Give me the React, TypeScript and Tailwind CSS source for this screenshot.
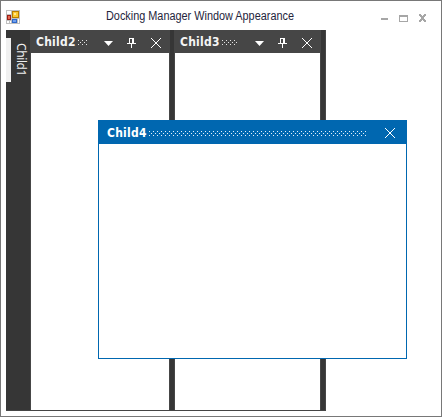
import { useId } from 'react';

function Grip({ width, color }: { width: number; color: string }) {
  const id = useId();
  return (
    <svg width={width} height="5" shapeRendering="crispEdges" className="mt-[2px] shrink-0">
      <defs>
        <pattern id={id} width="4" height="4" patternUnits="userSpaceOnUse">
          <rect width="1" height="1" fill={color} />
          <rect x="2" y="2" width="1" height="1" fill={color} />
        </pattern>
      </defs>
      <rect width={width} height="5" fill={`url(#${id})`} />
    </svg>
  );
}

const closeSteps = [0, 1, 2, 3, 4, 5, 6, 7, 8, 9];

function CloseIcon() {
  return (
    <svg width="10" height="10" viewBox="0 0 10 10" shapeRendering="crispEdges" className="block shrink-0" fill="#fff">
      {closeSteps.map((i) => (
        <g key={i}>
          <rect x={i} y={i} width="1" height="1" />
          <rect x={9 - i} y={i} width="1" height="1" />
        </g>
      ))}
    </svg>
  );
}

function ArrowIcon() {
  return (
    <svg width="9" height="10" viewBox="0 0 9 10" className="block shrink-0">
      <path d="M0 3h9L4.5 8z" fill="#fff" />
    </svg>
  );
}

function PinIcon() {
  return (
    <svg width="9" height="10" viewBox="0 0 9 10" shapeRendering="crispEdges" className="block shrink-0">
      <path d="M2 0h5v5h2v1H5v4H4V6H0V5h2zM3 1v4h2V1z" fill="#fff" fillRule="evenodd" />
    </svg>
  );
}

function DockHeader({ title, grip }: { title: string; grip: number }) {
  return (
    <div className="flex h-[23px] items-center bg-[#464646] pr-[8px] pl-[5px]">
      <span className="w-[42px] shrink-0 pt-[2px] font-['DejaVu_Sans_Condensed','DejaVu_Sans',sans-serif] text-[12px] leading-[21px] font-bold tracking-[0.25px] text-[#f4f4f4] [font-stretch:condensed]">
        {title}
      </span>
      <Grip width={grip} color="#e4e4e4" />
      <div className="ml-auto flex items-center pt-[3px]">
        <ArrowIcon />
        <div className="ml-[14px]"><PinIcon /></div>
        <div className="ml-[15px]"><CloseIcon /></div>
      </div>
    </div>
  );
}

function AppIcon() {
  return (
    <svg width="14" height="14" viewBox="0 0 14 14" shapeRendering="crispEdges">
      <path d="M0 0h14v14H0z" fill="#c0c0c0" />
      <path d="M1 1h4v3H1zM1 11h2v2H1zM4 11h1v2H4zM12 9h1v4h-1z" fill="#fff" />
      <path d="M1 5h4v5H1z" fill="#9c1c14" />
      <path d="M2 6h2v3H2z" fill="#e86850" />
      <path d="M6 1h7v7H6z" fill="#b87c00" />
      <path d="M7 2h5v5H7z" fill="#fcc830" />
      <path d="M8 3h2v2H8z" fill="#ffe890" />
      <path d="M6 9h5v4H6z" fill="#3068c8" />
      <path d="M7 10h3v2H7z" fill="#70a0f0" />
    </svg>
  );
}

function WindowButtons() {
  return (
    <svg width="46" height="9" viewBox="0 0 46 9" shapeRendering="crispEdges">
      <g fill="#a6a6a6">
        <path d="M0 4h7v2H0z" />
        <path d="M18 1h9v7h-9zM19 3v4h7V3z" fillRule="evenodd" />
        <path d="M38 0h2v1h-2zM43 0h2v1h-2zM38 1h3v1h-3zM42 1h3v1h-3zM39 2h5v1h-5zM40 3h3v2h-3zM39 5h5v1h-5zM38 6h3v1h-3zM42 6h3v1h-3zM38 7h2v1h-2zM43 7h2v1h-2z" />
      </g>
    </svg>
  );
}

export default function App() {
  return (
    <div className="relative flex h-[417px] w-[442px] flex-col border border-[#787878] bg-white pl-[5px] font-['Noto_Sans','Open_Sans',sans-serif]">
      <div className="flex h-[29px] shrink-0">
        <div className="mt-[9px] w-[100px]"><AppIcon /></div>
        <h1 className="mt-[7px] w-[275px] origin-left scale-x-[0.906] font-['Liberation_Sans',sans-serif] text-[12px] leading-[16px] font-normal whitespace-nowrap text-[#25253c]">
          Docking Manager Window Appearance
        </h1>
        <div className="mt-[13px]"><WindowButtons /></div>
      </div>
      <div className="flex h-[381px] w-[320px] border-b border-[#464646]">
        <aside className="flex w-[25px] border-r border-[#464646] bg-[#363636]">
          <div className="mt-[8px] h-[44px] w-[5px] bg-[#f0f0f0]" />
          <span className="mt-[13px] ml-px text-[12px] leading-[18px] tracking-[-0.4px] text-[#eeeeee] [writing-mode:vertical-rl]">Child1</span>
        </aside>
        <section className="w-[138px]"><DockHeader title="Child2" grip={9} /></section>
        <div className="w-[6px] border-x border-[#464646] bg-[#363636]" />
        <section className="w-[145px]"><DockHeader title="Child3" grip={15} /></section>
        <div className="w-[6px] border-x border-[#464646] bg-[#363636]" />
      </div>
      <div className="absolute top-[119px] left-[97px] h-[239px] w-[309px] border border-[#0067b0] bg-white">
        <div className="flex h-[23px] items-center bg-[#0067b0] pr-[11px] pl-[8px]">
          <span className="w-[42px] shrink-0 pt-[2px] font-['DejaVu_Sans_Condensed','DejaVu_Sans',sans-serif] text-[12px] leading-[21px] font-bold tracking-[0.25px] text-white [font-stretch:condensed]">
            Child4
          </span>
          <Grip width={218} color="#e4f0f8" />
          <div className="ml-auto pt-px"><CloseIcon /></div>
        </div>
      </div>
    </div>
  );
}
